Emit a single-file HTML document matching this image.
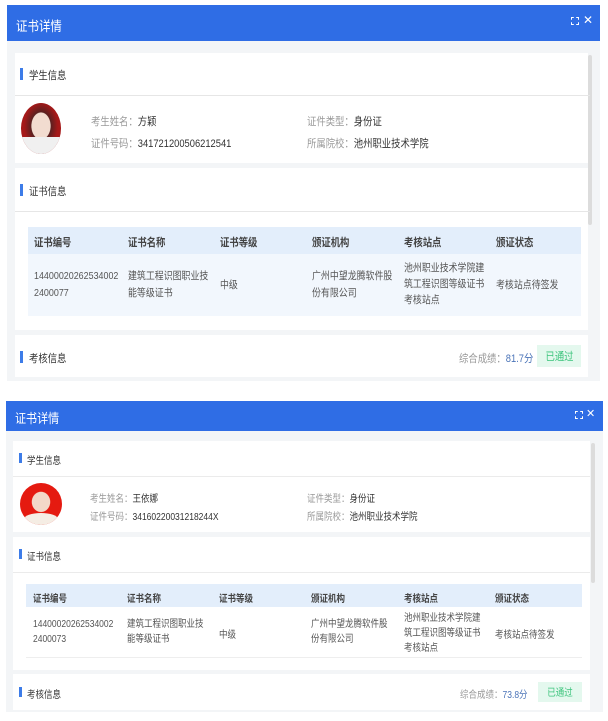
<!DOCTYPE html>
<html><head><meta charset="utf-8"><style>
*{margin:0;padding:0;box-sizing:border-box}
body{width:608px;height:721px;background:#fff;position:relative;overflow:hidden;font-family:"Liberation Sans","Noto Sans CJK SC",sans-serif;color:#333}
.a{position:absolute}
.hd{background:#2f6de5;color:#fff}
.bg{background:#f3f5f7}
.card{background:#fff}
.bar{width:3px;background:#3d7ce8}
.lbl{color:#999}
.t{white-space:nowrap;transform:scaleX(.85);transform-origin:0 0}
.th{background:#e3eefb}
.tr{background:#f2f7fd}
.badge{background:#e4f8ee;color:#3cc47c;text-align:center}
.sb{background:#dcdcdc;border-radius:2px}
.b{font-weight:bold;color:#444}
.c{color:#555}
</style></head><body>

<!-- Panel 1 -->
<div class="a bg" style="left:7px;top:5px;width:593px;height:376px"></div>
<div class="a hd" style="left:7px;top:5px;width:593px;height:36px"></div>
<div class="a t" style="left:16px;top:15px;color:#fff;font-size:13.5px">证书详情</div>
<div class="a" style="left:571px;top:17px;width:8px;height:8px;border:1.2px solid #fff;clip-path:polygon(0 0,35% 0,35% 35%,65% 35%,65% 0,100% 0,100% 35%,65% 35%,65% 65%,100% 65%,100% 100%,65% 100%,65% 65%,35% 65%,35% 100%,0 100%,0 65%,35% 65%,35% 35%,0 35%)"></div>
<div class="a" style="left:583px;top:13px;color:#fff;font-size:12px">✕</div>
<div class="a sb" style="left:588px;top:55px;width:4px;height:170px"></div>
<div class="a card" style="left:15px;top:53px;width:573px;height:110px"></div>
<div class="a" style="left:15px;top:95px;width:575px;height:1px;background:#e6e6e6"></div>
<div class="a bar" style="left:20px;top:68px;height:12px"></div>
<div class="a t" style="left:29px;top:67px;font-size:11px">学生信息</div>
<div class="a" style="left:21px;top:103px;width:40px;height:51px;border-radius:50%;background:radial-gradient(ellipse at 50% 45%,#f2dcd0 0 33%,#5a2020 35%,#a51818 60%);overflow:hidden"><div class="a" style="left:0;top:34px;width:40px;height:17px;background:#f0f0f0"></div></div>
<div class="a t" style="left:91px;top:113px;font-size:11px"><span class="lbl">考生姓名：</span>方颖</div>
<div class="a t" style="left:91px;top:135px;font-size:11px"><span class="lbl">证件号码：</span>341721200506212541</div>
<div class="a t" style="left:307px;top:113px;font-size:11px"><span class="lbl">证件类型：</span>身份证</div>
<div class="a t" style="left:307px;top:135px;font-size:11px"><span class="lbl">所属院校：</span>池州职业技术学院</div>
<div class="a card" style="left:15px;top:168px;width:573px;height:162px"></div>
<div class="a" style="left:15px;top:211px;width:575px;height:1px;background:#e6e6e6"></div>
<div class="a bar" style="left:20px;top:184px;height:12px"></div>
<div class="a t" style="left:29px;top:183px;font-size:11px">证书信息</div>
<div class="a th" style="left:28px;top:227px;width:553px;height:27px"></div>
<div class="a tr" style="left:28px;top:254px;width:553px;height:62px"></div>
<div class="a t b" style="left:34px;top:234px;font-size:11px">证书编号</div>
<div class="a t b" style="left:128px;top:234px;font-size:11px">证书名称</div>
<div class="a t b" style="left:220px;top:234px;font-size:11px">证书等级</div>
<div class="a t b" style="left:312px;top:234px;font-size:11px">颁证机构</div>
<div class="a t b" style="left:404px;top:234px;font-size:11px">考核站点</div>
<div class="a t b" style="left:496px;top:234px;font-size:11px">颁证状态</div>
<div class="a t c" style="left:34px;top:268px;font-size:10.5px;line-height:17px">14400020262534002<br>2400077</div>
<div class="a t c" style="left:128px;top:268px;font-size:10.5px;line-height:17px">建筑工程识图职业技<br>能等级证书</div>
<div class="a t c" style="left:220px;top:277px;font-size:10.5px">中级</div>
<div class="a t c" style="left:312px;top:268px;font-size:10.5px;line-height:17px">广州中望龙腾软件股<br>份有限公司</div>
<div class="a t c" style="left:404px;top:260px;font-size:10.5px;line-height:16px">池州职业技术学院建<br>筑工程识图等级证书<br>考核站点</div>
<div class="a t c" style="left:496px;top:277px;font-size:10.5px">考核站点待签发</div>
<div class="a card" style="left:15px;top:335px;width:573px;height:42px"></div>
<div class="a bar" style="left:20px;top:351px;height:12px"></div>
<div class="a t" style="left:29px;top:350px;font-size:11px">考核信息</div>
<div class="a t" style="left:459px;top:350px;font-size:11px"><span class="lbl">综合成绩：</span><span style="color:#4b74b8">81.7分</span></div>
<div class="a badge" style="left:537px;top:345px;width:44px;height:22px;line-height:22px"><span class="t" style="display:inline-block;font-size:11px;transform-origin:50% 50%">已通过</span></div>

<!-- Panel 2 -->
<div class="a bg" style="left:6px;top:401px;width:597px;height:311px"></div>
<div class="a hd" style="left:6px;top:401px;width:597px;height:30px"></div>
<div class="a t" style="left:15px;top:408px;color:#fff;font-size:13px">证书详情</div>
<div class="a" style="left:575px;top:411px;width:8px;height:8px;border:1.2px solid #fff;clip-path:polygon(0 0,35% 0,35% 35%,65% 35%,65% 0,100% 0,100% 35%,65% 35%,65% 65%,100% 65%,100% 100%,65% 100%,65% 65%,35% 65%,35% 100%,0 100%,0 65%,35% 65%,35% 35%,0 35%)"></div>
<div class="a" style="left:586px;top:407px;color:#fff;font-size:11px">✕</div>
<div class="a sb" style="left:591px;top:443px;width:4px;height:140px"></div>
<div class="a card" style="left:13px;top:441px;width:577px;height:91px"></div>
<div class="a" style="left:13px;top:476px;width:577px;height:1px;background:#ebebeb"></div>
<div class="a bar" style="left:19px;top:453px;height:10px"></div>
<div class="a t" style="left:27px;top:452px;font-size:10px">学生信息</div>
<div class="a" style="left:20px;top:483px;width:42px;height:42px;border-radius:50%;background:radial-gradient(ellipse at 50% 45%,#f3d8c8 0 30%,#e51a10 32%);overflow:hidden"><div class="a" style="left:4px;top:30px;width:34px;height:12px;background:#f5ede4;border-radius:50% 50% 0 0"></div></div>
<div class="a t" style="left:90px;top:490px;font-size:10px"><span class="lbl">考生姓名：</span>王依娜</div>
<div class="a t" style="left:90px;top:508px;font-size:10px"><span class="lbl">证件号码：</span>34160220031218244X</div>
<div class="a t" style="left:307px;top:490px;font-size:10px"><span class="lbl">证件类型：</span>身份证</div>
<div class="a t" style="left:307px;top:508px;font-size:10px"><span class="lbl">所属院校：</span>池州职业技术学院</div>
<div class="a card" style="left:13px;top:537px;width:577px;height:133px"></div>
<div class="a" style="left:13px;top:572px;width:577px;height:1px;background:#ebebeb"></div>
<div class="a bar" style="left:19px;top:549px;height:10px"></div>
<div class="a t" style="left:27px;top:548px;font-size:10px">证书信息</div>
<div class="a th" style="left:26px;top:584px;width:556px;height:23px"></div>
<div class="a" style="left:26px;top:657px;width:556px;height:1px;background:#eee"></div>
<div class="a t b" style="left:33px;top:590px;font-size:10px">证书编号</div>
<div class="a t b" style="left:127px;top:590px;font-size:10px">证书名称</div>
<div class="a t b" style="left:219px;top:590px;font-size:10px">证书等级</div>
<div class="a t b" style="left:311px;top:590px;font-size:10px">颁证机构</div>
<div class="a t b" style="left:404px;top:590px;font-size:10px">考核站点</div>
<div class="a t b" style="left:495px;top:590px;font-size:10px">颁证状态</div>
<div class="a t c" style="left:33px;top:617px;font-size:10px;line-height:15px">14400020262534002<br>2400073</div>
<div class="a t c" style="left:127px;top:617px;font-size:10px;line-height:15px">建筑工程识图职业技<br>能等级证书</div>
<div class="a t c" style="left:219px;top:626px;font-size:10px">中级</div>
<div class="a t c" style="left:311px;top:617px;font-size:10px;line-height:15px">广州中望龙腾软件股<br>份有限公司</div>
<div class="a t c" style="left:404px;top:611px;font-size:10px;line-height:15px">池州职业技术学院建<br>筑工程识图等级证书<br>考核站点</div>
<div class="a t c" style="left:495px;top:626px;font-size:10px">考核站点待签发</div>
<div class="a card" style="left:13px;top:674px;width:577px;height:36px"></div>
<div class="a bar" style="left:19px;top:687px;height:10px"></div>
<div class="a t" style="left:27px;top:686px;font-size:10px">考核信息</div>
<div class="a t" style="left:460px;top:686px;font-size:10px"><span class="lbl">综合成绩：</span><span style="color:#4b74b8">73.8分</span></div>
<div class="a badge" style="left:538px;top:682px;width:44px;height:20px;line-height:20px"><span class="t" style="display:inline-block;font-size:10px;transform-origin:50% 50%">已通过</span></div>
</body></html>
